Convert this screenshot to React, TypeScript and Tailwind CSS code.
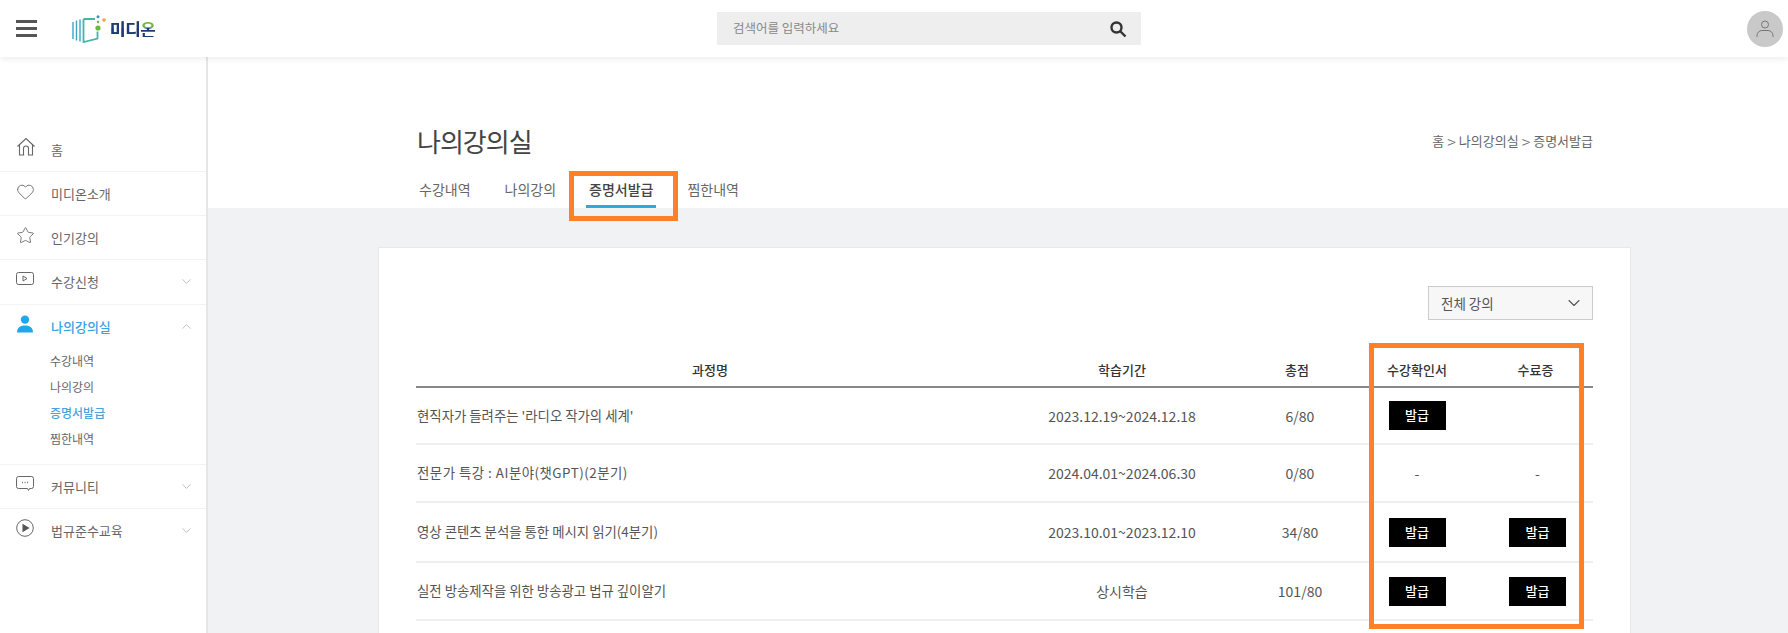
import React from 'react';
import { ChevronDown, ChevronUp, Heart, Star } from 'lucide-react';

const courses = [
  { title: "현직자가 들려주는 '라디오 작가의 세계'", spacing: "", period: "2023.12.19~2024.12.18", score: "6/80", receipt: "btn", done: "" },
  { title: "전문가 특강 : AI분야(챗GPT)(2분기)", spacing: "tracking-[0.5px]", period: "2024.04.01~2024.06.30", score: "0/80", receipt: "-", done: "-" },
  { title: "영상 콘텐츠 분석을 통한 메시지 읽기(4분기)", spacing: "", period: "2023.10.01~2023.12.10", score: "34/80", receipt: "btn", done: "btn" },
  { title: "실전 방송제작을 위한 방송광고 법규 깊이알기", spacing: "", period: "상시학습", score: "101/80", receipt: "btn", done: "btn" },
];

const rowHeights = ["h-[57px]", "h-[58px]", "h-[60px]", "h-[58px]"];

function HomeIcon() {
  return (
    <svg width="20" height="20" viewBox="0 0 20 20" fill="none" stroke="#666" strokeWidth="1.1">
      <path d="M1.5 9.5 10 1.5l8.5 8M3.5 8v10h4v-6.5a2.5 2.5 0 0 1 5 0V18h4V8" />
    </svg>
  );
}

function PlayRectIcon() {
  return (
    <svg width="18" height="14" viewBox="0 0 18 14" fill="none" stroke="#666" strokeWidth="1">
      <rect x="0.5" y="0.5" width="17" height="12" rx="2" />
      <path d="M7 4v5l4-2.5z" />
    </svg>
  );
}

function PersonIcon() {
  return (
    <svg width="18" height="18" viewBox="0 0 18 18" fill="#1ea7ec">
      <circle cx="9" cy="4.6" r="4.2" />
      <path d="M1 17.5c0-4.6 3-7 8-7s8 2.4 8 7z" />
    </svg>
  );
}

function ChatIcon() {
  return (
    <svg width="18" height="16" viewBox="0 0 18 16" fill="none" stroke="#666" strokeWidth="1">
      <path d="M2.5.5h13a2 2 0 0 1 2 2v8a2 2 0 0 1-2 2h-2l-1 2-1-2h-9a2 2 0 0 1-2-2v-8a2 2 0 0 1 2-2z" />
      <path d="M6 6.5h.9M8.6 6.5h.9M11.200 6.500h.9" strokeWidth="1.300" />
    </svg>
  );
}

function PlayCircleIcon() {
  return (
    <svg width="18" height="18" viewBox="0 0 18 18" fill="none">
      <circle cx="9" cy="9" r="8.300" stroke="#666" strokeWidth="1" />
      <path d="M6.500 4.800v8.400L13.500 9z" fill="#555" />
    </svg>
  );
}

function LogoMark() {
  return (
    <svg width="36" height="28" viewBox="0 0 36 28" fill="none">
      <path d="M1 7v17M4.500 5.500v20M8 4.500v22" stroke="#3aa5c9" strokeWidth="1.400" />
      <path d="M11.500 4h11.500M11.500 4v23l14-3.500v-7" stroke="#45b6a6" strokeWidth="1.800" />
      <circle cx="26" cy="13" r="2.600" fill="#6fb640" />
      <circle cx="26" cy="1.800" r="1.500" fill="#3f8fd0" />
      <circle cx="26" cy="7" r="1.200" fill="#6fb640" />
      <circle cx="32" cy="5" r="1.800" fill="#f0a040" />
    </svg>
  );
}

function MenuRow({ icon, label, chevron, active }: { icon: React.ReactNode; label: string; chevron?: 'up' | 'down'; active?: boolean }) {
  return (
    <div className="flex h-[43px] items-center pl-4 pr-[12px]">
      <span className="-mt-[5px] flex w-[35px] shrink-0 items-center">{icon}</span>
      <span className={`flex-1 text-[13px] ${active ? 'font-medium text-[#3d9fe3]' : 'text-[#666]'}`}>{label}</span>
      {chevron === 'down' && <ChevronDown className="h-[15px] w-[15px] text-[#aaa]" strokeWidth={1.200} />}
      {chevron === 'up' && <ChevronUp className="h-[15px] w-[15px] text-[#aaa]" strokeWidth={1.200} />}
    </div>
  );
}

function Sidebar() {
  return (
    <aside className="w-[208px] shrink-0 border-r-2 border-[#e6e6e6] bg-white pt-[71px]">
      <div className="border-b border-[#f3f3f3]">
        <MenuRow icon={<HomeIcon />} label="홈" />
      </div>
      <div className="border-b border-[#f3f3f3]">
        <MenuRow icon={<Heart className="h-[19px] w-[19px] text-[#666]" strokeWidth={1.100} />} label="미디온소개" />
      </div>
      <div className="border-b border-[#f3f3f3]">
        <MenuRow icon={<Star className="h-[19px] w-[19px] text-[#666]" strokeWidth={1.100} />} label="인기강의" />
      </div>
      <div className="border-b border-[#f3f3f3] pb-px">
        <MenuRow icon={<PlayRectIcon />} label="수강신청" chevron="down" />
      </div>
      <div className="border-b border-[#f3f3f3]">
        <MenuRow icon={<PersonIcon />} label="나의강의실" chevron="up" active />
        <ul className="pb-[12px] pl-[50px] text-xs text-[#666]">
          <li className="flex h-[26px] items-center">수강내역</li>
          <li className="flex h-[26px] items-center">나의강의</li>
          <li className="flex h-[26px] items-center font-medium text-[#4aa3e0]">증명서발급</li>
          <li className="flex h-[26px] items-center">찜한내역</li>
        </ul>
      </div>
      <div className="border-b border-[#f3f3f3]">
        <MenuRow icon={<ChatIcon />} label="커뮤니티" chevron="down" />
      </div>
      <MenuRow icon={<PlayCircleIcon />} label="법규준수교육" chevron="down" />
    </aside>
  );
}

function IssueButton() {
  return (
    <button className="h-[29px] w-[57px] bg-black text-[13px] font-medium text-white">발급</button>
  );
}

export default function App() {
  return (
    <div className="relative flex h-[633px] flex-col overflow-hidden bg-white font-['Noto_Sans_CJK_KR','Noto_Sans',sans-serif] text-[#444]">
      {/* Top bar */}
      <header className="relative z-10 flex h-[57px] shrink-0 items-center bg-white pl-4 pr-[5px] shadow-[0_2px_6px_rgba(0,0,0,0.08)]">
        <div className="flex w-[21px] flex-col gap-[4px]">
          <span className="h-[3px] bg-[#555]" />
          <span className="h-[3px] bg-[#555]" />
          <span className="h-[3px] bg-[#555]" />
        </div>
        <div className="ml-[35px] flex w-[98px] items-center gap-[2px]">
          <LogoMark />
          <span className="whitespace-nowrap bg-[linear-gradient(90deg,#1f3a7a_66%,transparent_66%),linear-gradient(#6fb640_45%,#1f3a7a_45%)] bg-clip-text text-[17px] font-bold leading-none tracking-[-0.5px] text-transparent">미디온</span>
        </div>
        <div className="ml-[547px] flex h-[33px] w-[424px] items-center justify-between bg-[#eeeeee] pl-4 pr-[14px]">
          <span className="text-[12.5px] text-[#888]">검색어를 입력하세요</span>
          <svg width="18" height="18" viewBox="0 0 18 18" fill="none" stroke="#333" strokeWidth="2.400">
            <circle cx="7.500" cy="7.500" r="5" />
            <path d="m11.500 11.500 5 5" />
          </svg>
        </div>
        <div className="ml-auto flex h-9 w-9 items-center justify-center rounded-full bg-[#c9c9c9]">
          <svg width="20" height="20" viewBox="0 0 20 20" fill="none" stroke="#777" strokeWidth="1">
            <circle cx="10" cy="5.500" r="3.500" />
            <path d="M2 18v-1.500c0-3 2.500-5 5-5h6c2.500 0 5 2 5 5V18" />
          </svg>
        </div>
      </header>

      <div className="flex min-h-0 flex-1">
        <Sidebar />

        <main className="flex min-w-0 flex-1 flex-col">
          {/* Title and tabs */}
          <div className="h-[151px] shrink-0 bg-white pl-[208px] pr-[195px] pt-[65px]">
            <div className="flex items-center justify-between">
              <h1 className="ml-px text-[26px] font-normal leading-[38px] tracking-[-1px] text-[#444]">나의강의실</h1>
              <span className="flex items-center gap-[3px] text-[13px] text-[#666]">
                홈<span className="text-[16px] font-light leading-none">&gt;</span>나의강의실<span className="text-[16px] font-light leading-none">&gt;</span>증명서발급
              </span>
            </div>
            <nav className="mt-[18px] flex pl-[3px] text-sm text-[#666]">
              <a className="mr-[34px] leading-[22px]">수강내역</a>
              <a className="mr-[30px] leading-[22px]">나의강의</a>
              <a className="mr-[31px] border-b-[3px] border-[#2fa8e0] px-[3px] pb-[5px] font-medium leading-[22px] text-[#444]">증명서발급</a>
              <a className="leading-[22px]">찜한내역</a>
            </nav>
          </div>

          {/* Certificate list */}
          <div className="flex-1 bg-[#f1f2f4] pl-[170px] pt-[39px]">
            <section className="h-[500px] w-[1253px] border border-[#e8e8e8] bg-white pl-[37px] pr-[37px] pt-[38px]">
              <div className="flex justify-end">
                <div className="flex h-[34px] w-[165px] items-center justify-between border border-[#cccccc] bg-[#f7f7f7] pl-[12px] pr-[8px] text-[13.5px] text-[#555]">
                  전체 강의
                  <ChevronDown className="h-5 w-5 text-[#555]" strokeWidth={1.300} />
                </div>
              </div>

              <table className="mt-[25px] w-[1177px] table-fixed border-collapse text-sm text-[#555]">
                <colgroup>
                  <col className="w-[588px]" />
                  <col className="w-[236px]" />
                  <col className="w-[114px]" />
                  <col className="w-[126px]" />
                  <col className="w-[113px]" />
                </colgroup>
                <thead>
                  <tr className="h-[42px] border-b-2 border-[#888] text-[13px] text-[#333]">
                    <th className="pt-[9px] font-medium">과정명</th>
                    <th className="pt-[9px] font-medium">학습기간</th>
                    <th className="pt-[9px] font-medium">총점</th>
                    <th className="pt-[9px] font-medium">수강확인서</th>
                    <th className="pr-[2px] pt-[9px] font-medium">수료증</th>
                  </tr>
                </thead>
                <tbody>
                  {courses.map((c, idx) => (
                    <tr key={idx} className={`${rowHeights[idx]} border-b-2 border-[#eeeeee]`}>
                      <td className={`pl-px text-[13.4px] ${c.spacing}`}>{c.title}</td>
                      <td className="text-center">{c.period}</td>
                      <td className="pl-[6px] text-center">{c.score}</td>
                      <td className="text-center">{c.receipt === 'btn' ? <IssueButton /> : c.receipt}</td>
                      <td className="pl-[2px] text-center">{c.done === 'btn' ? <IssueButton /> : c.done}</td>
                    </tr>
                  ))}
                </tbody>
              </table>
            </section>
          </div>
        </main>
      </div>

      {/* Orange highlight boxes drawn over the page */}
      <div className="pointer-events-none absolute left-[569px] top-[171px] h-[50px] w-[109px] border-[5px] border-[#ff8025]" />
      <div className="pointer-events-none absolute left-[1369px] top-[343px] h-[286px] w-[215px] border-[5px] border-[#ff8025]" />
    </div>
  );
}
